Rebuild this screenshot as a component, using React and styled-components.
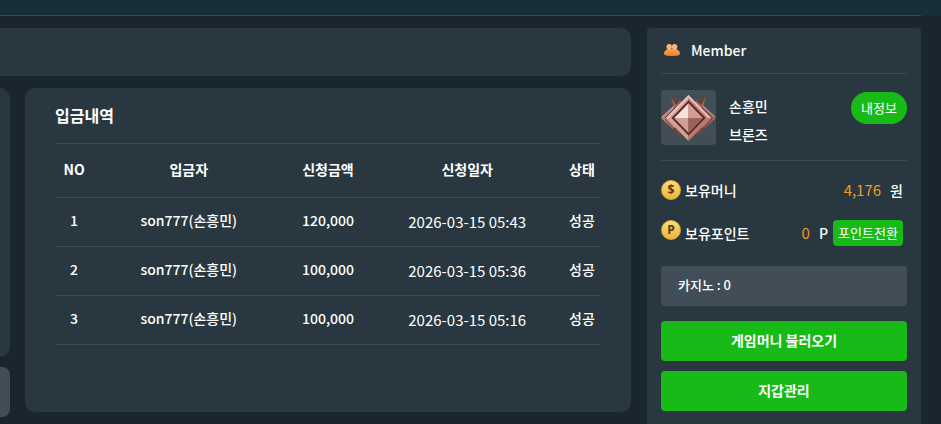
import styled, { createGlobalStyle } from 'styled-components';

const deposits = [
  { no: 1, name: 'son777(손흥민)', amount: '120,000', date: '2026-03-15 05:43', status: '성공' },
  { no: 2, name: 'son777(손흥민)', amount: '100,000', date: '2026-03-15 05:36', status: '성공' },
  { no: 3, name: 'son777(손흥민)', amount: '100,000', date: '2026-03-15 05:16', status: '성공' },
];

export default function App() {
  return (
    <>
      <GlobalStyle />
      <TopBar>
        <TopLine />
      </TopBar>
      <Page>
        <Main>
          <Banner />
          <Columns>
            <SideColumn>
              <SidePanel />
              <SideBlock />
            </SideColumn>
            <DepositHistory />
          </Columns>
        </Main>
        <MemberPanel />
      </Page>
    </>
  );
}

function DepositHistory() {
  return (
    <Card>
      <CardTitle>입금내역</CardTitle>
      <Table>
        <thead>
          <tr>
            <Th $width="7%">NO</Th>
            <Th $width="35%">입금자</Th>
            <Th $width="16%">신청금액</Th>
            <Th $width="35%">신청일자</Th>
            <Th $width="7%">상태</Th>
          </tr>
        </thead>
        <tbody>
          {deposits.map(({ no, name, amount, date, status }) => (
            <tr key={no}>
              <Td>{no}</Td>
              <Td>{name}</Td>
              <Td>{amount}</Td>
              <DateTd>{date}</DateTd>
              <Td>{status}</Td>
            </tr>
          ))}
        </tbody>
      </Table>
    </Card>
  );
}

function MemberPanel() {
  return (
    <Aside>
      <AsideTitle>
        <MemberIcon />
        Member
      </AsideTitle>

      <Profile>
        <Avatar>
          <BronzeBadge />
        </Avatar>
        <Names>
          <span>손흥민</span>
          <span>브론즈</span>
        </Names>
        <InfoButton type="button">내정보</InfoButton>
      </Profile>

      <Balances>
        <Balance>
          <Coin symbol="$" />
          <Label>보유머니</Label>
          <Value>4,176</Value>
          <Unit>원</Unit>
        </Balance>
        <Balance>
          <Coin symbol="P" />
          <Label>보유포인트</Label>
          <Value>0</Value>
          <Unit>P</Unit>
          <ConvertButton type="button">포인트전환</ConvertButton>
        </Balance>
      </Balances>

      <Casino>카지노 : 0</Casino>
      <Actions>
        <ActionButton type="button">게임머니 불러오기</ActionButton>
        <ActionButton type="button">지갑관리</ActionButton>
      </Actions>
    </Aside>
  );
}

function MemberIcon() {
  return (
    <svg width="18" height="14" viewBox="0 0 18 14" aria-hidden="true">
      <defs>
        <linearGradient id="people" x1="0" y1="0" x2="0" y2="1">
          <stop offset="0" stopColor="#ffb05c" />
          <stop offset="1" stopColor="#f47416" />
        </linearGradient>
      </defs>
      <path d="M1 10.500C1 8 4 6 6.500 6h5C14 6 17 8 17 10.500c0 2-3 2.500-8 2.500s-8-.500-8-2.500z" fill="url(#people)" />
      <circle cx="6.200" cy="3.800" r="2.700" fill="#f6b878" />
      <circle cx="11.600" cy="3.800" r="2.700" fill="#f6b878" />
      <path d="M4 6.800c1 1.400 3.500 1.400 4.800 0 1.300 1.400 3.800 1.400 4.800 0" fill="none" stroke="#f88a32" />
    </svg>
  );
}

function BronzeBadge() {
  return (
    <svg width="55" height="55" viewBox="0 0 55 55" aria-hidden="true">
      {/* Wings */}
      <path d="M10 7l14 6-9 11zM45 7l-14 6 9 11z" fill="#9b645d" />
      <path d="M10 7l5 8 4-4zM45 7l-5 8-4-4z" fill="#6b3b35" />
      <path d="M7 33l10 12 3-1-9-15zM48 33L38 45l-3-1 9-15z" fill="#7a433d" />
      <path d="M0 28l12-11 12 11-12 11z" fill="#b77e76" />
      <path d="M55 28L43 17 31 28l12 11z" fill="#9a625c" />
      <path d="M1 27l12-11M54 27L42 16" stroke="#ddb0a7" />
      <path d="M4 28l10-10M51 28L41 18M4 29l10 11M51 29L41 40" stroke="#713e38" />

      {/* Frame */}
      <path d="M27.500 5L5 28l22.500 23z" fill="#d3a197" />
      <path d="M27.500 5L50 28 27.500 51z" fill="#b77b72" />
      <path d="M27.500 5L5 28h3L27.500 8 47 28h3z" fill="#e8c1b8" />

      {/* Gem */}
      <path d="M27.500 10.500L10.500 28l17 17.500 17-17.500z" fill="#50231f" />
      <path d="M27.500 12.500L12.500 28l15 15.500 15-15.500z" fill="#925b52" />
      <path d="M27.500 13.500V28h-14z" fill="#f5e2db" />
      <path d="M27.500 13.500l14 14.500h-14z" fill="#cf9d92" />
      <path d="M13.500 28h14v14.500z" fill="#cda095" />
      <path d="M41.500 28h-14v14.500z" fill="#9a6359" />
    </svg>
  );
}

function Coin({ symbol }) {
  return (
    <CoinFace>
      <span>{symbol}</span>
    </CoinFace>
  );
}

const GlobalStyle = createGlobalStyle`
  * {
    box-sizing: border-box;
  }

  body {
    margin: 0;
    background: #19262e;
    color: #fff;
    font-family: 'Noto Sans CJK KR', sans-serif;
    font-size: 14px;
    font-weight: 500;
    line-height: 20px;
  }

  button {
    border: 0;
    background: #18ba18;
    color: #fff;
    font: inherit;
    cursor: pointer;
  }
`;

const TopBar = styled.header`
  height: 16px;
  padding: 15px 20px 0 0;
  background: #182e38;
`;

const TopLine = styled.div`
  height: 1px;
  background: #3b4b54;
`;

const Page = styled.div`
  display: flex;
  gap: 16px;
  padding: 12px 20px 0 0;
`;

const Main = styled.main`
  flex: 1;
  min-width: 0;
`;

const Banner = styled.section`
  height: 48px;
  margin-bottom: 12px;
  border-radius: 0 10px 10px 0;
  background: #293840;
`;

const Columns = styled.div`
  display: flex;
  align-items: flex-start;
  gap: 15px;
`;

const SideColumn = styled.div`
  display: flex;
  flex-direction: column;
  gap: 10px;
  width: 10px;
`;

const SidePanel = styled.div`
  height: 269px;
  border-radius: 0 10px 10px 0;
  background: #293840;
`;

const SideBlock = styled.div`
  height: 50px;
  border-radius: 0 8px 8px 0;
  background: #424e57;
`;

const Card = styled.section`
  flex: 1;
  min-width: 0;
  min-height: 324px;
  padding: 0 30px 30px;
  border-radius: 10px;
  background: #293840;
`;

const CardTitle = styled.h2`
  margin: 0;
  padding: 17px 0 18px;
  border-bottom: 1px solid #3d4d55;
  font-size: 16px;
  font-weight: 700;
  line-height: 20px;
`;

const Table = styled.table`
  width: 100%;
  table-layout: fixed;
  border-spacing: 0;
  text-align: center;
  white-space: nowrap;
`;

const Th = styled.th`
  width: ${(props) => props.$width};
  height: 54px;
  padding: 0 0 4px;
  border-bottom: 1px solid #3d4d55;
  font-weight: 700;
`;

const Td = styled.td`
  height: 49px;
  padding: 0 0 4px;
  border-bottom: 1px solid #3d4d55;
`;

const DateTd = styled(Td)`
  padding: 0;
  font-size: 15px;
  font-weight: 400;
`;

const Aside = styled.aside`
  width: 274px;
  padding: 0 14px 13px;
  border-radius: 4px 4px 0 0;
  background: #293840;
`;

const AsideTitle = styled.h2`
  display: flex;
  align-items: center;
  gap: 10px;
  height: 46px;
  margin: 0;
  padding: 0 0 2px 2px;
  border-bottom: 1px solid #3d4d55;
  font-size: 14px;
  font-weight: 500;
`;

const Profile = styled.div`
  display: flex;
  padding: 16px 0 15px;
  border-bottom: 1px solid #3d4d55;
`;

const Avatar = styled.div`
  width: 55px;
  height: 55px;
  border-radius: 4px;
  background: #424e57;
`;

const Names = styled.div`
  display: flex;
  flex: 1;
  flex-direction: column;
  gap: 8px;
  padding: 6px 0 0 13px;
`;

const InfoButton = styled.button`
  width: 56px;
  height: 32px;
  margin-top: 2px;
  padding: 0;
  border-radius: 16px;
  font-size: 13px;
  font-weight: 400;
`;

const Balances = styled.div`
  display: flex;
  flex-direction: column;
  gap: 20px;
  padding: 19px 4px 20px 0;
`;

const Balance = styled.div`
  display: flex;
  align-items: center;
`;

const CoinFace = styled.span`
  display: flex;
  align-items: center;
  align-self: flex-start;
  justify-content: center;
  width: 20px;
  height: 20px;
  border: 1px solid #d9a53a;
  border-radius: 50%;
  background: linear-gradient(#fbdd7d, #edb536);
  color: #573916;
  font: 700 12px/18px 'Open Sans', sans-serif;
`;

const Label = styled.span`
  flex: 1;
  padding-left: 4px;
`;

const Value = styled.span`
  color: #f39a1a;
  font-size: 15px;
  font-weight: 400;
`;

const Unit = styled.span`
  padding-left: 9px;
`;

const ConvertButton = styled.button`
  width: 70px;
  height: 26px;
  margin-left: 5px;
  padding: 0;
  border-radius: 4px;
  font-size: 13px;
  font-weight: 400;
`;

const Casino = styled.div`
  padding: 9px 17px 11px;
  border-radius: 4px;
  background: #424e57;
  font-size: 13px;
`;

const Actions = styled.div`
  display: flex;
  flex-direction: column;
  gap: 10px;
  margin-top: 15px;
`;

const ActionButton = styled.button`
  height: 40px;
  padding: 0 0 2px;
  border-radius: 4px;
  font-weight: 700;
`;
